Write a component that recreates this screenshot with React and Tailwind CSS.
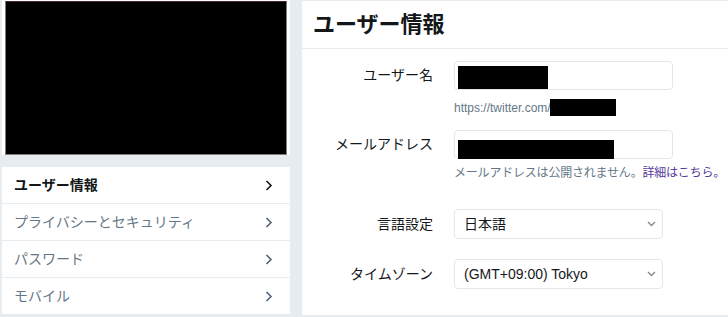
import React from "react";

const font = { fontFamily: '"Liberation Sans", "Noto Sans CJK JP", sans-serif' };

function Chevron({ dark }) {
	return (
		<svg width="8" height="11" viewBox="0 0 8 11" className="shrink-0">
			<path
				d="M1.5 1 L6 5.5 L1.5 10"
				fill="none"
				stroke={dark ? "#14171a" : "#4f6275"}
				strokeWidth="1.6"
			/>
		</svg>
	);
}

function SelectArrow() {
	return (
		<svg width="9" height="6" viewBox="0 0 9 6" className="shrink-0">
			<path d="M1 1 L4.5 4.5 L8 1" fill="none" stroke="#8a8a8a" strokeWidth="1.4" />
		</svg>
	);
}

const navItems = [
	{ label: "ユーザー情報", active: true },
	{ label: "プライバシーとセキュリティ" },
	{ label: "パスワード" },
	{ label: "モバイル" },
];

function NavRow({ item }) {
	return (
		<div className="h-[37px] flex items-center justify-between pl-[12px] pr-[17px] border-b border-[#e6ecf0]">
			<span
				className={
					item.active
						? "text-[14px] font-bold text-[#14171a]"
						: "text-[14px] text-[#657786]"
				}
			>
				{item.label}
			</span>
			<Chevron dark={item.active} />
		</div>
	);
}

function Label({ children }) {
	return (
		<div className="w-[131px] shrink-0 text-right text-[14px] text-[#14171a]">{children}</div>
	);
}

function Select({ value }) {
	return (
		<div className="ml-[21px] w-[209px] h-[30px] border border-[#e1e8ed] rounded-[4px] flex items-center justify-between pl-[9px] pr-[6px] text-[14px] text-[#14171a]">
			<span>{value}</span>
			<SelectArrow />
		</div>
	);
}

export default function App() {
	return (
		<div
			className="w-[728px] h-[317px] overflow-hidden bg-[#e6ecf0] flex"
			style={font}
		>
			<div className="w-[288px] ml-[2px] shrink-0 flex flex-col">
				<div className="h-[155px] bg-white pt-[1px] px-[3px]">
					<div className="h-full bg-black border border-[#7d7d7d] border-t-[#4a2630]" />
				</div>
				<div className="mt-[12px] bg-white">
					{navItems.map((item) => (
						<NavRow key={item.label} item={item} />
					))}
				</div>
			</div>

			<div className="ml-[12px] mt-[1px] flex-1 h-[315px] bg-white border-b border-[#e6ecf0] flex flex-col">
				<div className="h-[48px] border-b border-[#e6ecf0] flex items-center pl-[11px]">
					<h1 className="text-[22px] font-bold text-[#14171a] leading-none">ユーザー情報</h1>
				</div>

				<div className="mt-[12px] flex items-center">
					<Label>ユーザー名</Label>
					<div className="ml-[21px] w-[219px] h-[29px] border border-[#e1e8ed] rounded-[4px] pl-[3px] pt-[4px]">
						<div className="w-[90px] h-[23px] bg-black" />
					</div>
				</div>
				<div className="ml-[152px] mt-[9px] h-[17px] flex items-center text-[12px] text-[#657786]">
					<span>https://twitter.com/</span>
					<div className="w-[66px] h-[17px] bg-black -ml-[1px]" />
				</div>

				<div className="mt-[14px] flex items-center">
					<Label>メールアドレス</Label>
					<div className="ml-[21px] w-[219px] h-[29px] border border-[#e1e8ed] rounded-[4px] pl-[3px] pt-[9px]">
						<div className="w-[156px] h-[19px] bg-black" />
					</div>
				</div>
				<div className="ml-[152px] mt-[6px] h-[16px] leading-[16px] text-[12px] tracking-[-0.2px] whitespace-nowrap">
					<span className="text-[#657786]">メールアドレスは公開されません。</span>
					<span className="text-[#58399a]">詳細はこちら。</span>
				</div>

				<div className="mt-[28px] flex items-center">
					<Label>言語設定</Label>
					<Select value="日本語" />
				</div>

				<div className="mt-[20px] flex items-center">
					<Label>タイムゾーン</Label>
					<Select value="(GMT+09:00) Tokyo" />
				</div>
			</div>
		</div>
	);
}
